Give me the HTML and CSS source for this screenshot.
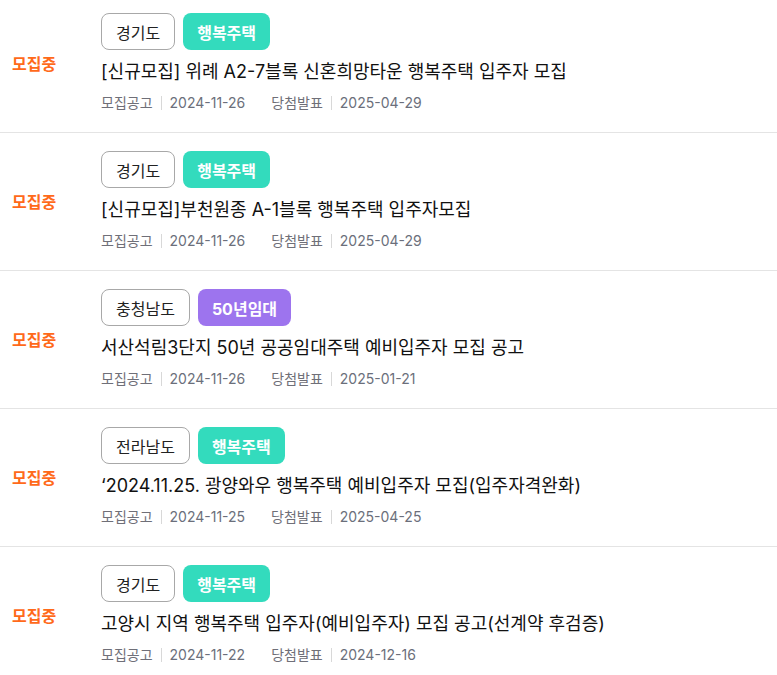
FILE: index.html
```html
<!DOCTYPE html>
<html>
<head>
	<meta charset="utf-8">
	<title>공고 목록</title>
	<link rel="stylesheet" href="styles.css">
</head>
<body>
	<div class="list">
		<div class="item">
			<div class="status">모집중</div>
			<div class="body">
				<div class="tags">
					<span class="tag region">경기도</span>
					<span class="tag type green">행복주택</span>
				</div>
				<div class="title">[신규모집] 위례 A2-7블록 신혼희망타운 행복주택 입주자 모집</div>
				<div class="meta">
					<span class="label">모집공고</span><span class="date">2024-11-26</span>
					<span class="label">당첨발표</span><span class="date">2025-04-29</span>
				</div>
			</div>
		</div>

		<div class="item">
			<div class="status">모집중</div>
			<div class="body">
				<div class="tags">
					<span class="tag region">경기도</span>
					<span class="tag type green">행복주택</span>
				</div>
				<div class="title">[신규모집]부천원종 A-1블록 행복주택 입주자모집</div>
				<div class="meta">
					<span class="label">모집공고</span><span class="date">2024-11-26</span>
					<span class="label">당첨발표</span><span class="date">2025-04-29</span>
				</div>
			</div>
		</div>

		<div class="item">
			<div class="status">모집중</div>
			<div class="body">
				<div class="tags">
					<span class="tag region">충청남도</span>
					<span class="tag type purple">50년임대</span>
				</div>
				<div class="title">서산석림3단지 50년 공공임대주택 예비입주자 모집 공고</div>
				<div class="meta">
					<span class="label">모집공고</span><span class="date">2024-11-26</span>
					<span class="label">당첨발표</span><span class="date">2025-01-21</span>
				</div>
			</div>
		</div>

		<div class="item">
			<div class="status">모집중</div>
			<div class="body">
				<div class="tags">
					<span class="tag region">전라남도</span>
					<span class="tag type green">행복주택</span>
				</div>
				<div class="title">‘2024.11.25. 광양와우 행복주택 예비입주자 모집(입주자격완화)</div>
				<div class="meta">
					<span class="label">모집공고</span><span class="date">2024-11-25</span>
					<span class="label">당첨발표</span><span class="date">2025-04-25</span>
				</div>
			</div>
		</div>

		<div class="item">
			<div class="status">모집중</div>
			<div class="body">
				<div class="tags">
					<span class="tag region">경기도</span>
					<span class="tag type green">행복주택</span>
				</div>
				<div class="title">고양시 지역 행복주택 입주자(예비입주자) 모집 공고(선계약 후검증)</div>
				<div class="meta">
					<span class="label">모집공고</span><span class="date">2024-11-22</span>
					<span class="label">당첨발표</span><span class="date">2024-12-16</span>
				</div>
			</div>
		</div>
	</div>
</body>
</html>
```

FILE: styles.css
```css
body {
	margin: 0;
	background: #ffffff;
	font-family: Inter, "Noto Sans CJK KR", sans-serif;
	color: #111111;
}

.list {
	margin-top: -5px;
}

.item {
	display: flex;
	align-items: center;
	padding: 18px 0 19px;
	border-bottom: 1px solid #e4e4e4;
}

.status {
	width: 101px;
	padding-left: 12px;
	box-sizing: border-box;
	flex-shrink: 0;
	font-size: 16px;
	font-weight: 700;
	color: #ff6a1a;
}

.body {
	display: flex;
	flex-direction: column;
}

.tags {
	display: flex;
	gap: 8px;
}

.tag {
	height: 37px;
	box-sizing: border-box;
	display: flex;
	align-items: center;
	padding: 0 14px;
	border-radius: 8px;
	font-size: 16px;
}

.region {
	border: 1px solid #a8a8a8;
	color: #222222;
}

.type {
	color: #ffffff;
	font-weight: 700;
}

.green {
	background: #33dbbd;
}

.purple {
	background: #9d74ee;
}

.title {
	margin-top: 9px;
	font-size: 18px;
	line-height: 26px;
	color: #111111;
}

.meta {
	margin-top: 8px;
	font-size: 14px;
	line-height: 20px;
	color: #6f6f78;
	display: flex;
	align-items: center;
}

.label {
	display: flex;
	align-items: center;
}

.label::after {
	content: "";
	width: 1px;
	height: 14px;
	background: #d8d8d8;
	margin: 0 8px;
}

.date {
	margin-right: 26px;
	color: #6b6f7b;
}
```
